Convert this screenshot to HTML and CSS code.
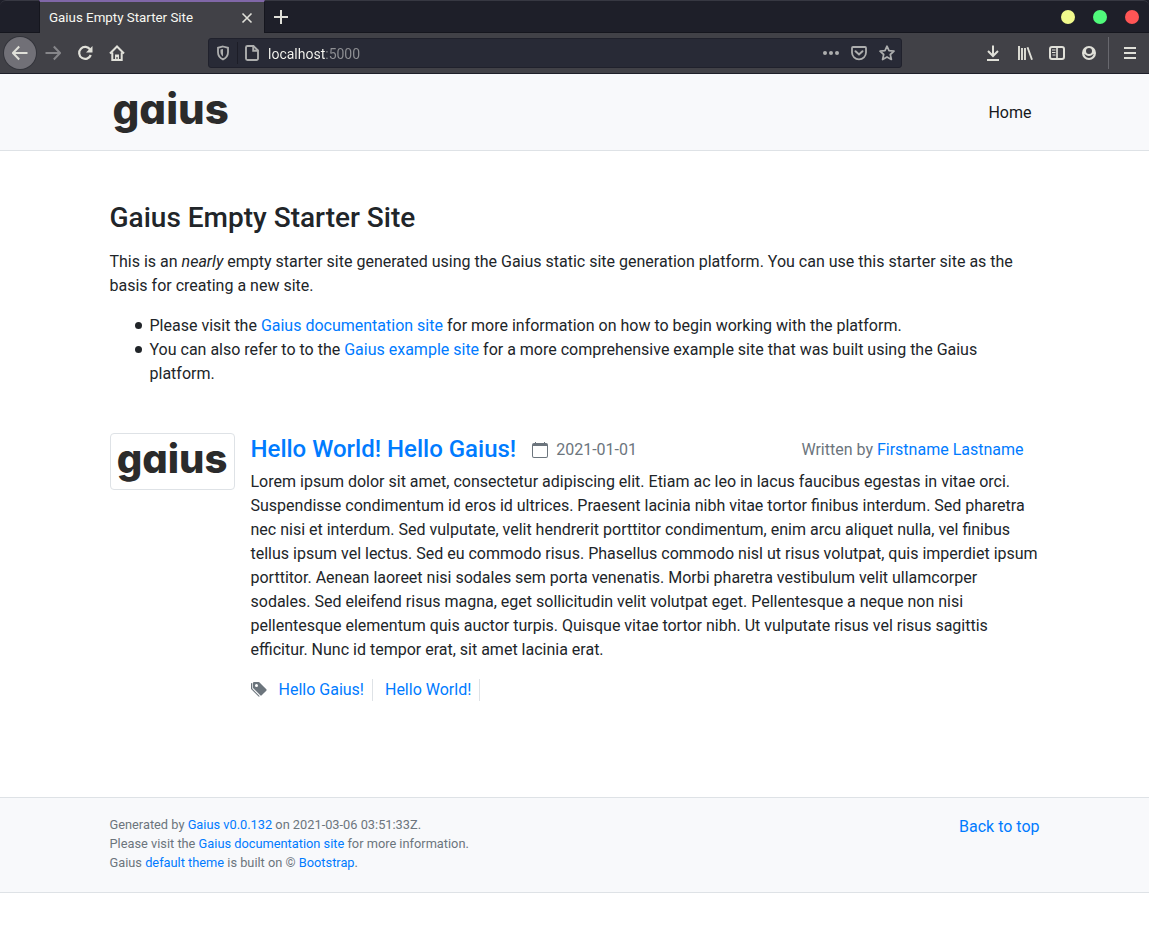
FILE: index.html
```html
<!DOCTYPE html>
<html lang="en">
<head>
<meta charset="utf-8">
<meta name="viewport" content="width=device-width, initial-scale=1">
<title>Gaius Empty Starter Site</title>
<link rel="stylesheet" href="styles.css">
</head>
<body>
<div class="browser">
  <div class="tabbar">
    <div class="tab">
      <span class="tab-title">Gaius Empty Starter Site</span>
      <button class="tab-close" type="button" aria-label="Close tab"><svg class="icon" viewBox="0 0 16 16"><path d="M3.500 3.500l9 9M12.500 3.500l-9 9" stroke-width="1.600"/></svg></button>
    </div>
    <button class="tab-new" type="button" aria-label="New tab"><svg class="icon" viewBox="0 0 16 16"><path d="M8 1v14M1 8h14" stroke-width="2"/></svg></button>
    <div class="window-buttons">
      <button class="dot dot-yellow" type="button" aria-label="Minimize"></button>
      <button class="dot dot-green" type="button" aria-label="Maximize"></button>
      <button class="dot dot-red" type="button" aria-label="Close window"></button>
    </div>
  </div>
  <div class="toolbar">
    <div class="tools">
      <button class="tool tool-back" type="button" aria-label="Back"><svg class="icon" viewBox="0 0 16 16"><path d="M15.500 8H1.500M7.200 1.500L1 8L7.200 14.500" stroke-width="2"/></svg></button>
      <button class="tool tool-dim" type="button" aria-label="Forward"><svg class="icon" viewBox="0 0 16 16"><path d="M.5 8h14M8.800 1.500L15 8l-6.200 6.500" stroke-width="2"/></svg></button>
      <button class="tool" type="button" aria-label="Reload"><svg class="icon" viewBox="0 0 16 16"><path d="M13.200 4.600A6 6 0 1 0 13.800 10" stroke-width="2.200"/><path class="fill" d="M15.500 1v6.500H9z"/></svg></button>
      <button class="tool" type="button" aria-label="Home"><svg class="icon" viewBox="0 0 16 16"><path d="M1 8.500L8 1.500l7 7M3.300 7.500V15h9.400V7.500" stroke-width="2"/><path class="fill" d="M6 14V9.500h4V14H8.600v-2H7.400v2z"/></svg></button>
    </div>
    <div class="urlbar">
      <button class="url-shield" type="button" aria-label="Tracking protection"><svg class="icon" viewBox="0 0 16 16"><path d="M8 1.500l5 1.300v4.400c0 3.400-1.800 5.700-5 7.200-3.200-1.500-5-3.800-5-7.200V2.800z" stroke-width="1.800"/><path class="fill" d="M8 4v7.500C6.300 10.200 5.500 8.800 5.500 6.800V4.600z"/></svg></button>
      <svg class="icon url-page" viewBox="0 0 16 16"><path d="M3.500 1h6l4.500 4.500V13.500a1.500 1.500 0 0 1-1.500 1.500h-9A1.500 1.500 0 0 1 2 13.500v-11A1.500 1.500 0 0 1 3.500 1zM9.200 1.500v4.300h4.300" stroke-width="1.900"/></svg>
      <input class="url-input" type="text" value="localhost:5000" aria-label="Address">
      <div class="url-actions">
        <button type="button" aria-label="Page actions"><svg class="icon" viewBox="0 0 16 16"><circle class="fill" cx="2" cy="8" r="2"/><circle class="fill" cx="8" cy="8" r="2"/><circle class="fill" cx="14" cy="8" r="2"/></svg></button>
        <button type="button" aria-label="Save to Pocket"><svg class="icon" viewBox="0 0 16 16"><path d="M2 2h12a1 1 0 0 1 1 1v4.500a7 6.800 0 0 1-14 0V3a1 1 0 0 1 1-1z" stroke-width="1.800"/><path d="M4.500 6.200L8 9.500l3.500-3.300" stroke-width="2" stroke-linecap="round"/></svg></button>
        <button type="button" aria-label="Bookmark this page"><svg class="icon" viewBox="0 0 16 16"><path d="M8 1.200l2 4.500 5 .5-3.700 3.300 1.100 5L8 11.900l-4.400 2.600 1.100-5L1 6.200l5-.5z" stroke-width="1.700" stroke-linejoin="round"/></svg></button>
      </div>
    </div>
    <div class="tools">
      <button class="tool" type="button" aria-label="Downloads"><svg class="icon" viewBox="0 0 16 16"><path d="M8 .5v10M3 6l5 5 5-5" stroke-width="2"/><path d="M2 15h12" stroke-width="2"/></svg></button>
      <button class="tool" type="button" aria-label="Library"><svg class="icon" viewBox="0 0 16 16"><path d="M2 1v14M5 3v12M8 3v12M10.500 2.300l4.500 12.500" stroke-width="1.900"/></svg></button>
      <button class="tool" type="button" aria-label="Sidebars"><svg class="icon" viewBox="0 0 16 16"><rect x="1" y="2" width="14" height="12" rx="2" stroke-width="2"/><path d="M8 2v12" stroke-width="1.700"/><path d="M3 5h3.500M3 7.500h3.500M3.500 10H6.500" stroke-width="1.200"/></svg></button>
      <button class="tool" type="button" aria-label="Account"><svg class="icon" viewBox="0 0 16 16"><path class="fill" fill-rule="evenodd" d="M8 1a7 7 0 1 0 0 14A7 7 0 0 0 8 1zM8 3a3 3 0 1 1 0 6A3 3 0 0 1 8 3zM3.500 8.800c1 1 2.200 2.200 4.500 2.200s3.500-1.200 4.500-2.200c.3 1.200-1.500 4.200-4.500 4.200s-4.800-3-4.500-4.200z"/></svg></button>
      <span class="tools-rule"></span>
      <button class="tool" type="button" aria-label="Menu"><svg class="icon" viewBox="0 0 16 16"><path d="M2 3h12M2 8h12M2 13h12" stroke-width="2"/></svg></button>
    </div>
  </div>
</div>

<header class="site-header" id="top">
  <div class="container header-row">
    <a class="logo" href="#top">gaius</a>
    <nav class="site-nav"><a class="nav-link" href="#top">Home</a></nav>
  </div>
</header>

<main class="container site-main">
  <h1>Gaius Empty Starter Site</h1>
  <p>This is an <em>nearly</em> empty starter site generated using the Gaius static site generation platform. You can use this starter site as the basis for creating a new site.</p>
  <ul class="intro-list">
    <li>Please visit the <a href="#docs">Gaius documentation site</a> for more information on how to begin working with the platform.</li>
    <li>You can also refer to to the <a href="#example">Gaius example site</a> for a more comprehensive example site that was built using the Gaius platform.</li>
  </ul>

  <article class="post">
    <a class="thumb" href="#post">gaius</a>
    <div class="post-body">
      <div class="post-head">
        <h2><a href="#post">Hello World! Hello Gaius!</a></h2>
        <span class="post-date"><svg class="glyph" viewBox="0 0 16 16"><path d="M3 0h1v1h8V0h1v1h1a2 2 0 0 1 2 2v11a2 2 0 0 1-2 2H2a2 2 0 0 1-2-2V3a2 2 0 0 1 2-2h1zM1 4v10a1 1 0 0 0 1 1h12a1 1 0 0 0 1-1V4z" fill-rule="evenodd"/></svg>2021-01-01</span>
        <span class="post-author">Written by <a href="#author">Firstname Lastname</a></span>
      </div>
      <p class="post-text">Lorem ipsum dolor sit amet, consectetur adipiscing elit. Etiam ac leo in lacus faucibus egestas in vitae orci. Suspendisse condimentum id eros id ultrices. Praesent lacinia nibh vitae tortor finibus interdum. Sed pharetra nec nisi et interdum. Sed vulputate, velit hendrerit porttitor condimentum, enim arcu aliquet nulla, vel finibus tellus ipsum vel lectus. Sed eu commodo risus. Phasellus commodo nisl ut risus volutpat, quis imperdiet ipsum porttitor. Aenean laoreet nisi sodales sem porta venenatis. Morbi pharetra vestibulum velit ullamcorper sodales. Sed eleifend risus magna, eget sollicitudin velit volutpat eget. Pellentesque a neque non nisi pellentesque elementum quis auctor turpis. Quisque vitae tortor nibh. Ut vulputate risus vel risus sagittis efficitur. Nunc id tempor erat, sit amet lacinia erat.</p>
      <div class="tags">
        <svg class="glyph" viewBox="0 0 16 16"><path fill-rule="evenodd" d="M2 1a1 1 0 0 1 1-1h4.586a1 1 0 0 1 .707.293l7 7a1 1 0 0 1 0 1.414l-4.586 4.586a1 1 0 0 1-1.414 0l-7-7A1 1 0 0 1 2 5.586zm5 2.500a1.500 1.500 0 1 0-3 0 1.500 1.500 0 0 0 3 0z"/><path d="M1.300 1A1 1 0 0 0 0 2v4.586a1 1 0 0 0 .293.707l7 7a1 1 0 0 0 1.414 0l.043-.043-7.160-7.160A1 1 0 0 1 1.300 6.400z"/></svg>
        <a class="tag" href="#hello-gaius">Hello Gaius!</a>
        <a class="tag" href="#hello-world">Hello World!</a>
      </div>
    </div>
  </article>
</main>

<footer class="site-footer">
  <div class="container footer-row">
    <div class="credits">
      <div>Generated by <a href="#gaius">Gaius v0.0.132</a> on 2021-03-06 03:51:33Z.</div>
      <div>Please visit the <a href="#docs">Gaius documentation site</a> for more information.</div>
      <div>Gaius <a href="#theme">default theme</a> is built on © <a href="#bootstrap">Bootstrap</a>.</div>
    </div>
    <a href="#top">Back to top</a>
  </div>
</footer>
</body>
</html>
```
FILE: styles.css
```css
* { box-sizing: border-box; }
body {
  margin: 0;
  background: #fff;
  color: #212529;
  font: 16px/24px Roboto, "Liberation Sans", sans-serif;
}
a { color: #007bff; text-decoration: none; }
p { margin: 0; }
button { padding: 0; border: 0; background: none; color: inherit; font: inherit; }
.icon { display: block; width: 16px; height: 16px; fill: none; stroke: currentColor; }
.icon .fill { fill: currentColor; stroke: none; }
.glyph { flex: none; width: 16px; height: 16px; fill: currentColor; }

/* Browser window */
.browser { background: #1e1f29; color: #e0e0d9; }
.tabbar {
  display: flex;
  align-items: stretch;
  height: 33px;
  padding-left: 39px;
  border-top: 1px solid #373842;
  background: #1e1f29;
  border-radius: 6px 6px 0 0;
  box-shadow: inset 0 -1px #15161e;
}
.tab {
  display: flex;
  align-items: center;
  justify-content: space-between;
  width: 226px;
  margin-top: -1px;
  padding: 0 9px;
  border: 1px solid #15161e;
  border-width: 0 1px;
  border-top: 2px solid #8067a8;
  background: #414147;
}
.tab-title { font-size: 10pt; line-height: 18px; color: #f8f8f2; }
.tab-new { width: 32px; display: grid; place-items: center; }
.window-buttons { display: flex; align-items: center; gap: 18px; margin-left: auto; padding-right: 10px; }
.dot { width: 14px; height: 14px; border-radius: 50%; }
.dot-yellow { background: #f1fa8c; }
.dot-green { background: #50fa7b; }
.dot-red { background: #ff5555; }
.toolbar {
  display: flex;
  align-items: center;
  gap: 75px;
  padding: 4px 3px 4px 4px;
  border-bottom: 1px solid #1e1f29;
  background: #414147;
}
.tools { display: flex; align-items: center; }
.tool { display: grid; place-items: center; width: 32px; height: 32px; }
.tool-back { margin-right: 1px; border-radius: 50%; background: #717077; box-shadow: 0 0 0 1px #33343b; }
.tool-dim { color: #86868a; }
.tools-rule { align-self: stretch; width: 1px; margin: 0 5px 0 3px; background: #68686e; }
.urlbar {
  display: flex;
  align-items: center;
  flex: 1;
  height: 30px;
  padding-right: 6px;
  border: 1px solid #20212c;
  border-radius: 3px;
  background: #282a36;
  color: #adaeae;
}
.url-shield { display: grid; place-items: center; width: 29px; height: 22px; border-right: 1px solid #1c1d27; }
.url-page { flex: none; margin: 0 8px 0 6px; }
.url-input {
  flex: 1;
  min-width: 0;
  padding: 2px 0 0;
  border: 0;
  outline: 0;
  color: #f8f8f2;
  font: 14px/20px Roboto, "Liberation Sans", sans-serif;
  background: linear-gradient(90deg, #f8f8f2 57px, #8f9094 57px);
  background-clip: text;
  -webkit-background-clip: text;
  -webkit-text-fill-color: transparent;
}
.url-actions { display: flex; gap: 12px; }

/* Page */
.container { width: 100%; max-width: 960px; margin: 0 auto; padding: 0 15px; }
.site-header { background: #f8f9fb; border-bottom: 1px solid #dee2e6; }
.header-row { display: flex; align-items: center; justify-content: space-between; height: 76px; }
.logo, .thumb {
  color: #2b2b2b;
  font-family: Inter, Roboto, sans-serif;
  font-weight: 800;
  font-feature-settings: "cv11", "ss03";
}
.logo { padding: 0 0 6px 3px; font-size: 42px; line-height: 48px; }
.site-nav { padding-top: 2px; }
.nav-link { padding: 8px; color: #16181b; }
.site-main { padding-top: 50px; padding-bottom: 95px; }
h1 { margin: 0 0 15px; font-size: 28px; line-height: 34px; font-weight: 500; }
.intro-list { margin: 16px 0 47px; padding-left: 40px; list-style: none; }
.intro-list li::before {
  content: "";
  display: inline-block;
  width: 7px;
  height: 7px;
  margin: 0 8px 0 -15px;
  border-radius: 50%;
  background: currentColor;
  vertical-align: 2px;
}
.post { display: flex; align-items: flex-start; gap: 16px; }
.thumb {
  flex: none;
  width: 125px;
  padding: 4px 4px 10px;
  border: 1px solid #dee2e6;
  border-radius: 4px;
  background: #fff;
  text-align: center;
  font-size: 40px;
  line-height: 41px;
}
.post-body { flex: 1; min-width: 0; }
.post-head { display: flex; align-items: center; gap: 16px; padding-right: 16px; margin-bottom: 5px; }
h2 { margin: 0; font-size: 24px; line-height: 32px; font-weight: 500; }
.post-date, .post-author { padding-top: 2px; color: #6c757d; }
.post-date { display: flex; align-items: center; gap: 8px; }
.post-author { margin-left: auto; }
.tags { display: flex; align-items: center; margin-top: 16px; height: 24px; color: #6c757d; }
.tag { margin-left: 12px; padding-right: 8px; border-right: 1px solid #dee2e6; line-height: 22px; }
.site-footer { background: #f8f9fb; border: 1px solid #dee2e6; border-width: 1px 0; }
.footer-row { display: flex; justify-content: space-between; align-items: flex-start; padding-top: 17px; padding-bottom: 20px; }
.credits { color: #6c757d; font-size: 80%; line-height: 19px; }
```
